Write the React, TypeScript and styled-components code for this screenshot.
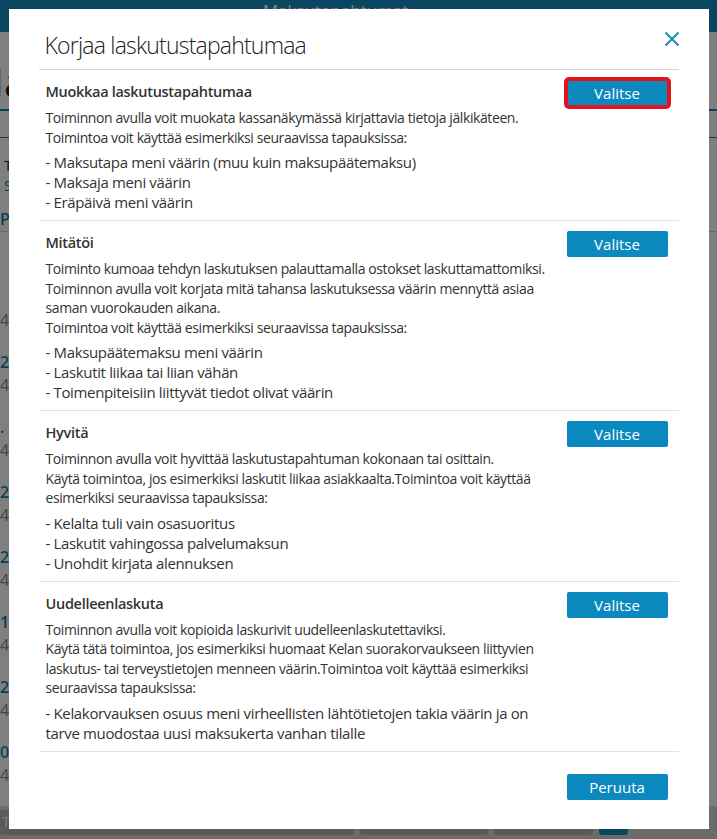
import React from 'react';
import styled, { createGlobalStyle } from 'styled-components';

const GlobalStyle = createGlobalStyle`
  html, body {
    margin: 0;
    padding: 0;
  }
  body {
    font-family: "Open Sans", "Liberation Sans", sans-serif;
    background: #ffffff;
    overflow: hidden;
  }
  * {
    box-sizing: border-box;
  }
`;

/* ---------- page behind the dialog ---------- */

const Page = styled.div`
  width: 717px;
  height: 839px;
  display: flex;
  flex-direction: column;
  background: #ffffff;
  overflow: hidden;
`;

const TopBar = styled.header`
  height: 32px;
  flex-shrink: 0;
  background: #168cc0;
  color: #ffffff;
  display: flex;
  justify-content: center;
  padding: 0 46px 0 0;
  font-size: 17px;
  line-height: 22px;
`;

const PageMain = styled.main`
  flex: 1;
  display: flex;
  flex-direction: column;
  margin-left: -22px;
  overflow: hidden;
`;

const PageTitle = styled.h1`
  margin: 0;
  height: 88px;
  padding-top: 22px;
  text-indent: -10px;
  font-size: 40px;
  font-weight: 400;
  color: #1b1b1b;
  border-bottom: 2px solid #137fb0;
  white-space: nowrap;
`;

const Toolbar = styled.div`
  height: 31px;
  border-bottom: 1px solid #137fb0;
`;

const Summary = styled.div`
  padding: 17px 0 0 26px;
  height: 71px;
  font-size: 15px;
  line-height: 20px;
  color: #222;
`;

const SummaryLink = styled.div`
  color: #137fb0;
`;

const TableHead = styled.div`
  height: 35px;
  padding: 8px 0 0 22px;
  font-size: 16px;
  line-height: 20px;
  font-weight: 600;
  color: #137fb0;
  border-bottom: 1px solid #cfcfcf;
`;

const Rows = styled.div`
  padding: 54px 0 0 22px;
`;

const Row = styled.div`
  height: 65px;
  display: flex;
  flex-direction: column;
  font-size: 16px;
  line-height: 23px;
`;

const RowRef = styled.span`
  color: #137fb0;
  font-weight: 600;
  min-height: 23px;
`;

const RowSub = styled.span`
  color: #8a8a8a;
`;

const BottomBar = styled.footer`
  height: 33px;
  flex-shrink: 0;
  background: #d6d6d6;
  display: flex;
  align-items: flex-end;
  gap: 6px;
  padding: 0 89px 4px 0;
`;

const BarButton = styled.div<{ $w?: number; $primary?: boolean }>`
  flex: ${({ $w }) => ($w ? `0 0 ${$w}px` : '1 1 auto')};
  height: 25px;
  border-radius: 3px;
  background: ${({ $primary }) => ($primary ? '#168cc0' : '#b4b4b4')};
  color: #ffffff;
  font-size: 15px;
  line-height: 22px;
  padding-left: 2px;
`;

/* ---------- dialog ---------- */

const Backdrop = styled.div`
  position: fixed;
  inset: 0;
  background: rgba(0, 0, 0, 0.5);
  display: flex;
  justify-content: center;
  align-items: flex-start;
  padding-top: 9px;
`;

const Dialog = styled.section`
  width: 700px;
  background: #ffffff;
  padding: 0 30px 29px;
  color: #333333;
`;

const DialogHeader = styled.header`
  height: 61px;
  display: flex;
  justify-content: space-between;
  align-items: flex-start;
  padding: 22px 0 0 6px;
  border-bottom: 1px solid #d6d6d6;
`;

const DialogTitle = styled.h2`
  margin: 0;
  font-size: 23px;
  line-height: 28px;
  font-weight: 300;
  letter-spacing: -0.8px;
  color: #222222;
`;

const CloseButton = styled.button`
  border: 0;
  background: none;
  padding: 0;
  margin: 0 -1px 0 0;
  width: 16px;
  height: 16px;
  color: #1b8ac0;
  cursor: pointer;
  display: flex;
`;

const Option = styled.div`
  padding: 10px 11px 8px 7px;
  border-bottom: 1px solid #e2e2e2;
`;

const OptionHead = styled.div`
  height: 26px;
  display: flex;
  align-items: center;
  justify-content: space-between;
`;

const OptionTitle = styled.h3`
  margin: 0;
  padding-bottom: 3px;
  font-size: 14.5px;
  font-weight: 600;
  letter-spacing: -0.3px;
  color: #333333;
`;

const Button = styled.button<{ $focused?: boolean }>`
  width: 101px;
  height: 26px;
  border: 0;
  border-radius: 2px;
  background: #0b89bf;
  color: #ffffff;
  font-family: inherit;
  font-size: 15px;
  padding: 0;
  cursor: pointer;
  outline: ${({ $focused }) => ($focused ? '4px solid #e3121d' : 'none')};
  outline-offset: -1px;
`;

const Body = styled.div`
  margin-top: 2px;
  font-size: 14px;
  line-height: 19.5px;
  letter-spacing: -0.4px;
`;

const Line = styled.div`
  white-space: nowrap;
`;

const Items = styled.ul`
  list-style: none;
  margin: 5px 0 0;
  padding: 0;
  font-size: 15px;
  line-height: 20px;
  letter-spacing: -0.35px;
`;

const DialogFooter = styled.div`
  display: flex;
  justify-content: flex-end;
  padding: 22px 11px 0 0;
`;

type OptionData = {
  title: string;
  body: string[];
  items: string[];
  focused?: boolean;
};

const options: OptionData[] = [
  {
    title: 'Muokkaa laskutustapahtumaa',
    body: [
      'Toiminnon avulla voit muokata kassanäkymässä kirjattavia tietoja jälkikäteen.',
      'Toimintoa voit käyttää esimerkiksi seuraavissa tapauksissa:',
    ],
    items: [
      '- Maksutapa meni väärin (muu kuin maksupäätemaksu)',
      '- Maksaja meni väärin',
      '- Eräpäivä meni väärin',
    ],
    focused: true,
  },
  {
    title: 'Mitätöi',
    body: [
      'Toiminto kumoaa tehdyn laskutuksen palauttamalla ostokset laskuttamattomiksi.',
      'Toiminnon avulla voit korjata mitä tahansa laskutuksessa väärin mennyttä asiaa',
      'saman vuorokauden aikana.',
      'Toimintoa voit käyttää esimerkiksi seuraavissa tapauksissa:',
    ],
    items: [
      '- Maksupäätemaksu meni väärin',
      '- Laskutit liikaa tai liian vähän',
      '- Toimenpiteisiin liittyvät tiedot olivat väärin',
    ],
  },
  {
    title: 'Hyvitä',
    body: [
      'Toiminnon avulla voit hyvittää laskutustapahtuman kokonaan tai osittain.',
      'Käytä toimintoa, jos esimerkiksi laskutit liikaa asiakkaalta.Toimintoa voit käyttää',
      'esimerkiksi seuraavissa tapauksissa:',
    ],
    items: [
      '- Kelalta tuli vain osasuoritus',
      '- Laskutit vahingossa palvelumaksun',
      '- Unohdit kirjata alennuksen',
    ],
  },
  {
    title: 'Uudelleenlaskuta',
    body: [
      'Toiminnon avulla voit kopioida laskurivit uudelleenlaskutettaviksi.',
      'Käytä tätä toimintoa, jos esimerkiksi huomaat Kelan suorakorvaukseen liittyvien',
      'laskutus- tai terveystietojen menneen väärin.Toimintoa voit käyttää esimerkiksi',
      'seuraavissa tapauksissa:',
    ],
    items: [
      '- Kelakorvauksen osuus meni virheellisten lähtötietojen takia väärin ja on',
      'tarve muodostaa uusi maksukerta vanhan tilalle',
    ],
  },
];

// rows of the payment list under the dialog
const rows = [
  { ref: '', sub: '4.4.2024' },
  { ref: '2504', sub: '4.4.2024' },
  { ref: '.', sub: '4.4.2024' },
  { ref: '2404', sub: '4.4.2024' },
  { ref: '2', sub: '4.4.2024' },
  { ref: '1', sub: '4.4.2024' },
  { ref: '2204', sub: '4.4.2024' },
  { ref: '0004', sub: '4.4.2024' },
];

function CloseIcon() {
  return (
    <svg width="16" height="16" viewBox="0 0 16 16" fill="none">
      <path d="M1.5 1.5 L14.5 14.5 M14.5 1.5 L1.5 14.5" stroke="currentColor" strokeWidth="2" />
    </svg>
  );
}

export default function App() {
  return (
    <>
      <GlobalStyle />
      <Page>
        <TopBar>Maksutapahtumat</TopBar>
        <PageMain>
          <PageTitle>Maksutapahtumat</PageTitle>
          <Toolbar />
          <Summary>
            <div>Tapahtumat</div>
            <SummaryLink>Suodata</SummaryLink>
          </Summary>
          <TableHead>Potilas</TableHead>
          <Rows>
            {rows.map((r, i) => (
              <Row key={i}>
                <RowRef>{r.ref}</RowRef>
                <RowSub>{r.sub}</RowSub>
              </Row>
            ))}
          </Rows>
        </PageMain>
        <BottomBar>
          <BarButton>Tulosta</BarButton>
          <BarButton $w={128} />
          <BarButton $w={99} />
          <BarButton $w={29} $primary />
        </BottomBar>
      </Page>

      <Backdrop>
        <Dialog role="dialog" aria-modal="true">
          <DialogHeader>
            <DialogTitle>Korjaa laskutustapahtumaa</DialogTitle>
            <CloseButton aria-label="Sulje">
              <CloseIcon />
            </CloseButton>
          </DialogHeader>

          {options.map((o) => (
            <Option key={o.title}>
              <OptionHead>
                <OptionTitle>{o.title}</OptionTitle>
                <Button $focused={o.focused}>Valitse</Button>
              </OptionHead>
              <Body>
                {o.body.map((l) => (
                  <Line key={l}>{l}</Line>
                ))}
              </Body>
              <Items>
                {o.items.map((it) => (
                  <li key={it}>{it}</li>
                ))}
              </Items>
            </Option>
          ))}

          <DialogFooter>
            <Button>Peruuta</Button>
          </DialogFooter>
        </Dialog>
      </Backdrop>
    </>
  );
}
